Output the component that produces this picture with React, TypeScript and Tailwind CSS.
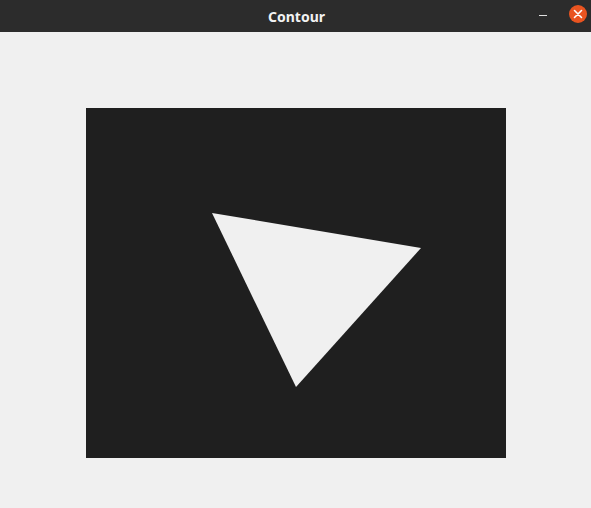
export default function App() {
  return (
    <div className="w-[591px] h-[508px] flex flex-col bg-[#f0f0f0] overflow-hidden" style={{ fontFamily: '"Noto Sans", "DejaVu Sans", sans-serif' }}>
      <div className="h-8 shrink-0 bg-[#2c2c2c] flex items-center relative">
        <span className="flex-1 text-center text-[14px] font-bold text-[#f2f2f2] pl-[2px]">Contour</span>
        <div className="absolute right-[4px] top-[5px] flex items-center gap-[22px]">
          <div className="w-[8px] h-[1px] bg-[#e0e0e0] mt-[3px]" />
          <div className="w-[18px] h-[18px] rounded-full bg-[#e95420] flex items-center justify-center">
            <svg width="10" height="10" viewBox="0 0 10 10">
              <path d="M1.5 1.5 L8.5 8.5 M8.5 1.5 L1.5 8.5" stroke="#ffffff" strokeWidth="1.6" strokeLinecap="round" />
            </svg>
          </div>
        </div>
      </div>
      <div className="flex-1 pt-[76px] pl-[86px]">
        <div className="w-[420px] h-[350px] bg-[#1f1f1f]">
          <svg width="420" height="350" viewBox="0 0 420 350">
            <polygon points="126,105 335,140 210,279" fill="#f0f0f0" />
          </svg>
        </div>
      </div>
    </div>
  );
}
